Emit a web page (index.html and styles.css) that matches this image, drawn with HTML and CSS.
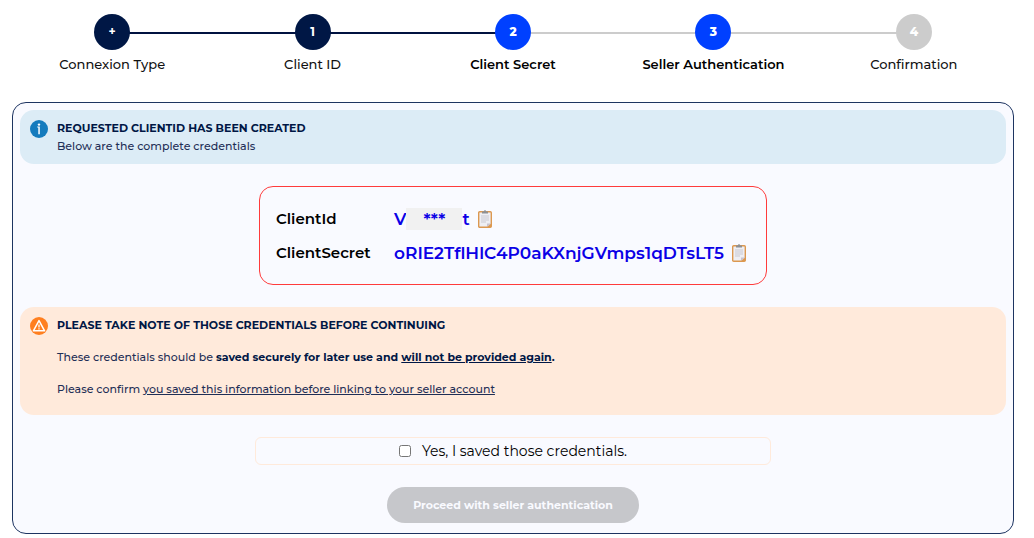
FILE: index.html
```html
<!DOCTYPE html>
<html lang="en">
<head>
  <meta charset="UTF-8" />
  <meta name="viewport" content="width=device-width, initial-scale=1.0" />
  <title>Client Secret</title>
  <link rel="stylesheet" href="styles.css">
</head>
<body>
  <ol class="stepper">
    <li class="step done"><span class="step-counter">+</span><span class="step-name">Connexion Type</span></li>
    <li class="step done"><span class="step-counter">1</span><span class="step-name">Client ID</span></li>
    <li class="step active"><span class="step-counter">2</span><span class="step-name">Client Secret</span></li>
    <li class="step active"><span class="step-counter">3</span><span class="step-name">Seller Authentication</span></li>
    <li class="step"><span class="step-counter">4</span><span class="step-name">Confirmation</span></li>
  </ol>

  <main class="panel">
    <section class="notice info">
      <svg class="notice-icon" viewBox="0 0 18 18" aria-hidden="true">
        <circle cx="9" cy="9" r="9" fill="#147bbd" />
        <circle cx="9" cy="4.6" r="1.2" fill="#fff" />
        <path d="M7.2 6.6h2.6v7.6H8.3V7.6H7.2z" fill="#fff" />
      </svg>
      <div class="notice-body">
        <h2>REQUESTED CLIENTID HAS BEEN CREATED</h2>
        <p>Below are the complete credentials</p>
      </div>
    </section>

    <dl class="credentials">
      <dt>ClientId</dt>
      <dd>
        <span>V<span class="mask">***</span>t</span>
        <button type="button" class="copy" aria-label="Copy ClientId">
          <svg viewBox="0 0 14 18" aria-hidden="true">
            <rect x="0.7" y="1.7" width="12.6" height="15.6" rx="1" fill="#eeeef3" stroke="#dc9850" stroke-width="1.4" />
            <path d="M4 3V1.4h1.8a1.2 1.2 0 0 1 2.4 0H10V3.6H4z" fill="#8d9094" />
            <path d="M3 6h8M3 8h8M3 10h8M3 12h5" stroke="#c9c9d2" stroke-width="1" />
            <path d="M9 17v-3.5h4.2z" fill="#c7c3d0" />
            <path d="M9 17l4.3-3.6V17z" fill="#dc9850" />
          </svg>
        </button>
      </dd>
      <dt>ClientSecret</dt>
      <dd>
        <span>oRIE2TflHlC4P0aKXnjGVmps1qDTsLT5</span>
        <button type="button" class="copy" aria-label="Copy ClientSecret">
          <svg viewBox="0 0 14 18" aria-hidden="true">
            <rect x="0.7" y="1.7" width="12.6" height="15.6" rx="1" fill="#eeeef3" stroke="#dc9850" stroke-width="1.4" />
            <path d="M4 3V1.4h1.8a1.2 1.2 0 0 1 2.4 0H10V3.6H4z" fill="#8d9094" />
            <path d="M3 6h8M3 8h8M3 10h8M3 12h5" stroke="#c9c9d2" stroke-width="1" />
            <path d="M9 17v-3.5h4.2z" fill="#c7c3d0" />
            <path d="M9 17l4.3-3.6V17z" fill="#dc9850" />
          </svg>
        </button>
      </dd>
    </dl>

    <section class="notice warning">
      <svg class="notice-icon" viewBox="0 0 18 18" aria-hidden="true">
        <circle cx="9" cy="9" r="9" fill="#ff7f1f" />
        <path d="M9 3.6L14.6 13.8H3.4z" fill="none" stroke="#fff" stroke-width="1.5" stroke-linejoin="round" />
        <path d="M9 7.4v3M9 11.3v1.2" stroke="#fff" stroke-width="1.3" />
      </svg>
      <div class="notice-body">
        <h2>PLEASE TAKE NOTE OF THOSE CREDENTIALS BEFORE CONTINUING</h2>
        <p>These credentials should be <strong>saved securely for later use and <u>will not be provided again</u>.</strong></p>
        <p>Please confirm <u>you saved this information before linking to your seller account</u></p>
      </div>
    </section>

    <label class="confirm" for="saved">
      <input type="checkbox" id="saved" />
      Yes, I saved those credentials.
    </label>

    <button type="button" class="proceed" disabled>Proceed with seller authentication</button>
  </main>
</body>
</html>
```

FILE: styles.css
```css
* {
  box-sizing: border-box;
}
body {
  margin: 0;
  padding: 14px 20px 4px 12px;
  font-family: "Montserrat", "Inter", sans-serif;
  font-size: 13px;
  font-weight: 500;
  color: #111;
  background: #fff;
}
h2, p, ol, dl, dd {
  margin: 0;
}

/* stepper */
.stepper {
  display: flex;
  padding: 0;
  margin-bottom: 28px;
  list-style: none;
}
.step {
  position: relative;
  flex: 1;
  display: flex;
  flex-direction: column;
  align-items: center;
  gap: 4px;
  line-height: 20px;
}
/* line to the next step */
.step:not(:last-child)::after {
  content: "";
  position: absolute;
  top: 18px;
  left: 50%;
  width: 100%;
  height: 2px;
  background: #ccc;
}
.step.done::after {
  background: #001240;
}
.step-counter {
  position: relative;
  z-index: 1;
  display: flex;
  align-items: center;
  justify-content: center;
  width: 36px;
  height: 36px;
  border-radius: 50%;
  background: #ccc;
  color: #fff;
  font-size: 12px;
  font-weight: 800;
}
.step.done .step-counter {
  background: #001745;
  font-weight: 700;
}
.step.active .step-counter {
  background: #0040ff;
}
.step.active .step-name {
  font-weight: 600;
  color: #000;
}

/* panel */
.panel {
  display: flex;
  flex-direction: column;
  align-items: center;
  gap: 22px;
  padding: 7px 7px 10px;
  border: 1px solid #1d3461;
  border-radius: 14px;
  background: #f9faff;
}
.notice {
  display: flex;
  align-self: stretch;
  gap: 9px;
  padding: 9px 10px;
  border-radius: 14px;
  color: #1f2f56;
  font-size: 11px;
  line-height: 18px;
}
.notice.info {
  background: #dcecf6;
}
.notice.warning {
  padding-bottom: 17px;
  background: #ffeadb;
}
.notice-icon {
  flex: none;
  width: 18px;
  height: 18px;
  margin-top: 1px;
}
.notice h2 {
  font-size: 11px;
  font-weight: 700;
  color: #001745;
}
.notice strong {
  font-weight: 700;
  color: #001745;
}
.notice.warning p {
  margin-top: 14px;
}

/* credentials */
.credentials {
  display: grid;
  grid-template-columns: 118px auto;
  align-items: center;
  row-gap: 10px;
  padding: 20px 20px 19px 16px;
  border: 1px solid #ff3b3b;
  border-radius: 14px;
  line-height: 24px;
}
.credentials dt {
  font-size: 15px;
  font-weight: 600;
  color: #000;
}
.credentials dd {
  display: flex;
  align-items: center;
  gap: 8px;
  font-size: 17px;
  font-weight: 600;
  color: #0b00e6;
}
.mask {
  display: inline-block;
  width: 56px;
  height: 22px;
  line-height: 22px;
  text-align: center;
  background: #f1f1f1;
}
.copy {
  display: flex;
  padding: 0;
  border: none;
  background: none;
  cursor: pointer;
}
.copy svg {
  width: 14px;
  height: 18px;
}

/* confirmation */
.confirm {
  display: flex;
  align-items: center;
  justify-content: center;
  gap: 11px;
  width: 516px;
  max-width: 100%;
  padding: 3px;
  border: 1px solid #ffeadb;
  border-radius: 6px;
  font-size: 14px;
  font-weight: 400;
  line-height: 20px;
  color: #000;
}
.confirm input {
  width: 12px;
  height: 12px;
  margin: 0;
}
.proceed {
  padding: 9px 26px;
  border: none;
  border-radius: 18px;
  background: #c6c7cb;
  color: #f9faff;
  font-family: inherit;
  font-size: 11px;
  font-weight: 700;
  line-height: 18px;
}
```
